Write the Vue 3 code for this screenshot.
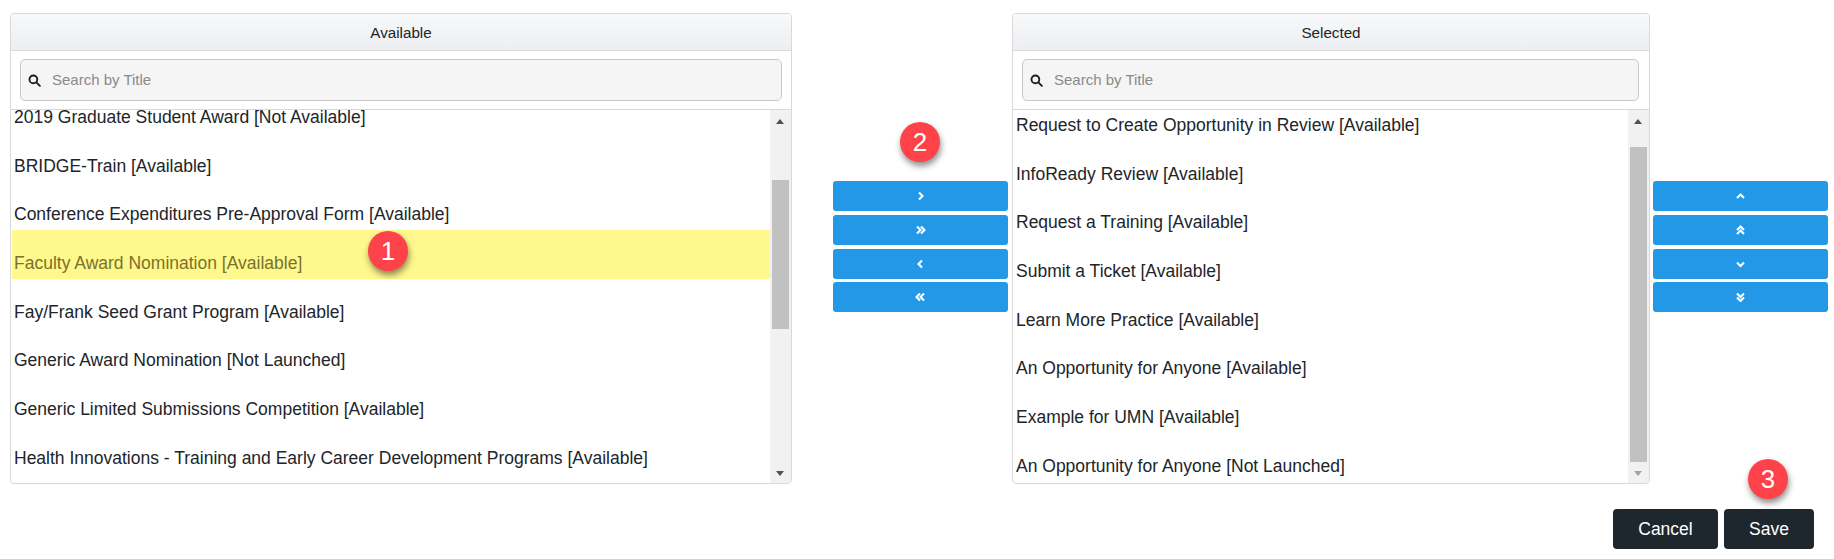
<script setup>
const leftItems = [
  { text: '2019 Graduate Student Award [Not Available]' },
  { text: 'BRIDGE-Train [Available]' },
  { text: 'Conference Expenditures Pre-Approval Form [Available]' },
  { text: 'Faculty Award Nomination [Available]', active: true },
  { text: 'Fay/Frank Seed Grant Program [Available]' },
  { text: 'Generic Award Nomination [Not Launched]' },
  { text: 'Generic Limited Submissions Competition [Available]' },
  { text: 'Health Innovations - Training and Early Career Development Programs [Available]' },
]
const rightItems = [
  'Request to Create Opportunity in Review [Available]',
  'InfoReady Review [Available]',
  'Request a Training [Available]',
  'Submit a Ticket [Available]',
  'Learn More Practice [Available]',
  'An Opportunity for Anyone [Available]',
  'Example for UMN [Available]',
  'An Opportunity for Anyone [Not Launched]',
]
const moveIcons = [
  ['M4 1.5 7.5 5 4 8.5'],
  ['M2 1.5 5.5 5 2 8.5', 'M6 1.5 9.5 5 6 8.5'],
  ['M7 1.5 3.5 5 7 8.5'],
  ['M5 1.5 1.5 5 5 8.5', 'M9 1.5 5.5 5 9 8.5'],
]
const orderIcons = [
  ['M1.5 7 5 3.5 8.5 7'],
  ['M1.5 5 5 1.5 8.5 5', 'M1.5 9 5 5.5 8.5 9'],
  ['M1.5 3.5 5 7 8.5 3.5'],
  ['M1.5 1.5 5 5 8.5 1.5', 'M1.5 5.5 5 9 8.5 5.5'],
]
</script>

<template>
  <div class="page">
    <div class="dual">
      <section class="panel panel-left">
        <header class="panel-head">Available</header>
        <div class="search-wrap">
          <label class="search">
            <svg class="search-icon" viewBox="0 0 14 14"><circle cx="5.8" cy="5.8" r="4.2" /><path d="M9 9l3.8 3.8" /></svg>
            <input type="text" placeholder="Search by Title" />
          </label>
        </div>
        <div class="list-box">
          <ul class="list list-a">
            <li v-for="item in leftItems" :key="item.text" :class="{ active: item.active }">{{ item.text }}</li>
          </ul>
          <div class="track">
            <span class="arrow up"></span>
            <span class="thumb thumb-a"></span>
            <span class="arrow down dark"></span>
          </div>
        </div>
      </section>

      <div class="btn-col btn-col-mid">
        <button v-for="(icon, i) in moveIcons" :key="i" class="move" type="button">
          <svg viewBox="0 0 11 10"><path v-for="d in icon" :key="d" :d="d" /></svg>
        </button>
      </div>

      <section class="panel panel-right">
        <header class="panel-head">Selected</header>
        <div class="search-wrap">
          <label class="search">
            <svg class="search-icon" viewBox="0 0 14 14"><circle cx="5.8" cy="5.8" r="4.2" /><path d="M9 9l3.8 3.8" /></svg>
            <input type="text" placeholder="Search by Title" />
          </label>
        </div>
        <div class="list-box">
          <ul class="list list-b">
            <li v-for="item in rightItems" :key="item">{{ item }}</li>
          </ul>
          <div class="track">
            <span class="arrow up"></span>
            <span class="thumb thumb-b"></span>
            <span class="arrow down"></span>
          </div>
        </div>
      </section>

      <div class="btn-col btn-col-right">
        <button v-for="(icon, i) in orderIcons" :key="i" class="move" type="button">
          <svg viewBox="0 0 10 10"><path v-for="d in icon" :key="d" :d="d" /></svg>
        </button>
      </div>
    </div>

    <div class="footer">
      <button class="dark-btn cancel" type="button">Cancel</button>
      <button class="dark-btn save" type="button">Save</button>
    </div>

    <span class="badge b1">1</span>
    <span class="badge b2">2</span>
    <span class="badge b3">3</span>
  </div>
</template>

<style>
html, body { margin: 0; background: #fff; }
</style>

<style scoped>
.page {
  position: relative;
  width: 1834px;
  height: 559px;
  overflow: hidden;
  box-sizing: border-box;
  padding: 13px 0 0 10px;
  font-family: "Liberation Sans", Arial, sans-serif;
  color: #212529;
}
.dual { display: flex; align-items: flex-start; }
.panel {
  box-sizing: border-box;
  height: 471px;
  border: 1px solid #d9d9d9;
  border-radius: 4px;
  display: flex;
  flex-direction: column;
  overflow: hidden;
  background: #fff;
}
.panel-left { width: 782px; }
.panel-right { width: 638px; margin-left: 4px; }
.panel-right .search-wrap { padding-right: 10px; }
.panel-head {
  height: 37px;
  box-sizing: border-box;
  border-bottom: 1px solid #d9d9d9;
  background: linear-gradient(#f8f9fa, #eceef1);
  font-size: 15.2px;
  line-height: 37px;
  text-align: center;
  flex: none;
}
.search-wrap {
  flex: none;
  height: 59px;
  box-sizing: border-box;
  padding: 8px 9px 0;
  border-bottom: 1px solid #d9d9d9;
}
.search {
  display: flex;
  align-items: center;
  height: 42px;
  box-sizing: border-box;
  border: 1px solid #c8c8c8;
  border-radius: 5px;
  background: #f5f5f5;
  padding-left: 7px;
}
.search-icon {
  width: 13px;
  height: 13px;
  flex: none;
  fill: none;
  stroke: #1c1c1c;
  stroke-width: 2;
  stroke-linecap: round;
}
.search input {
  flex: 1;
  min-width: 0;
  border: 0;
  outline: 0;
  background: transparent;
  padding: 0 0 2px 11px;
  font: 15px "Liberation Sans", Arial, sans-serif;
  color: #212529;
}
.search input::placeholder { color: #8a8a8a; opacity: 1; }
.list-box { flex: 1; min-height: 0; display: flex; overflow: hidden; }
.list {
  flex: 1;
  min-width: 0;
  margin: 0;
  list-style: none;
  padding: 0 0 0 1px;
  font-size: 17.5px;
  line-height: 24px;
}
.list li {
  box-sizing: border-box;
  height: 48.7px;
  padding: 21px 0 0 2px;
  white-space: nowrap;
}
.list-a { margin-top: -26px; }
.list-b { margin-top: -18px; }
.list li.active { background: #fff88c; color: #77732b; }
.track {
  flex: none;
  width: 21px;
  background: #f1f1f1;
  display: flex;
  flex-direction: column;
  align-items: center;
  position: relative;
}
.thumb { display: block; width: 17px; background: #c1c1c1; }
.thumb-a { margin-top: 70px; height: 149px; }
.thumb-b { margin-top: 37px; height: 315px; }
.arrow {
  position: absolute;
  left: 6px;
  width: 0;
  height: 0;
  border-left: 4px solid transparent;
  border-right: 4px solid transparent;
}
.arrow.up { top: 9px; border-bottom: 5px solid #505050; }
.arrow.down { bottom: 7px; border-top: 5px solid #a3a3a3; }
.arrow.down.dark { border-top-color: #505050; }
.btn-col {
  flex: none;
  width: 175px;
  padding-top: 168px;
  display: flex;
  flex-direction: column;
  gap: 3.8px;
}
.btn-col-mid { margin-left: 41px; }
.btn-col-right { margin-left: 3px; }
.move {
  display: flex;
  align-items: center;
  justify-content: center;
  height: 30px;
  padding: 0;
  border: 0;
  border-radius: 3px;
  background: #2398e6;
}
.move svg {
  width: 11px;
  height: 10px;
  fill: none;
  stroke: #fff;
  stroke-width: 2.1;
}
.footer {
  display: flex;
  justify-content: flex-end;
  gap: 6px;
  padding: 25px 20px 0 0;
}
.dark-btn {
  height: 40px;
  border: 0;
  border-radius: 4px;
  padding: 0;
  background: #1f272e;
  color: #fff;
  font: 17.5px "Liberation Sans", Arial, sans-serif;
}
.cancel { width: 105px; }
.save { width: 90px; }
.badge {
  position: absolute;
  width: 40px;
  height: 40px;
  border-radius: 50%;
  background: #fd4349;
  color: #fff;
  font-size: 26px;
  line-height: 40px;
  text-align: center;
  box-shadow: 1px 4px 6px rgba(0, 0, 0, 0.45);
}
.b1 { left: 368px; top: 231px; }
.b2 { left: 900px; top: 122px; }
.b3 { left: 1748px; top: 459px; }
</style>
